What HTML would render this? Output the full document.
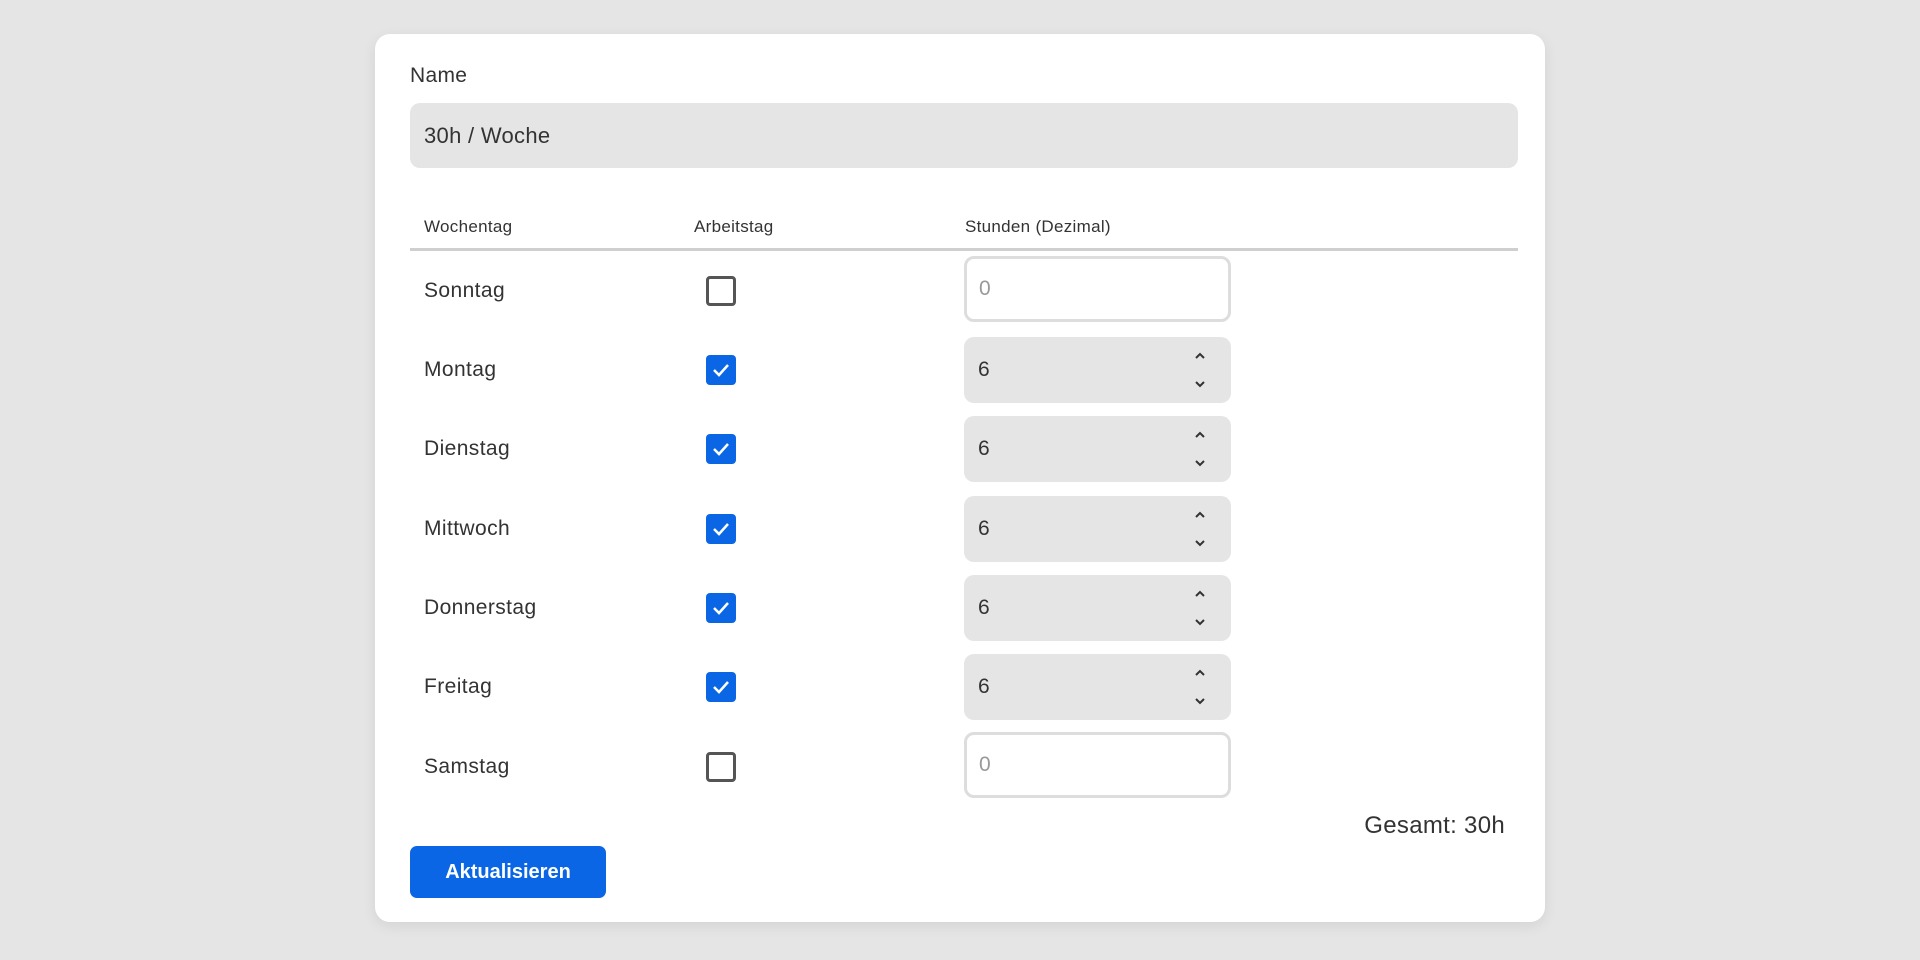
<!DOCTYPE html>
<html><head><meta charset="utf-8"><style>
*{box-sizing:border-box;margin:0;padding:0}
body{width:1920px;height:960px;background:#e5e5e5;font-family:"Liberation Sans",sans-serif;color:#333;position:relative;overflow:hidden}
.card{position:absolute;left:375px;top:34px;width:1170px;height:888px;background:#fff;border-radius:15px;box-shadow:0 4px 14px rgba(0,0,0,.08)}
.abs{position:absolute}
.lbl{font-size:21px;letter-spacing:.4px;color:#333}
.hd{font-size:17px;color:#333;letter-spacing:.3px}
.cb{position:absolute;left:706px;width:30px;height:30px;border-radius:4px}
.cb.off{border:3px solid #555}
.cb.on{background:#0a66e4}
.inp{position:absolute;left:964px;width:267px;height:66px;border-radius:10px;font-size:21px;padding-left:14px;line-height:66px}
.inp.off{border:3px solid #ddd;color:#999;line-height:60px;padding-left:12px}
.inp.on{background:#e5e5e5;color:#333}
.arr{position:absolute;right:24px;width:14px}
</style></head><body>
<div class="card"></div>
<div class="abs" style="left:410px;top:64px;font-size:21px;letter-spacing:.3px">Name</div>
<div class="abs" style="left:410px;top:103px;width:1108px;height:65px;background:#e5e5e5;border-radius:10px;font-size:22px;line-height:65px;padding-left:14px;letter-spacing:.3px">30h / Woche</div>
<div class="abs hd" style="left:424px;top:217px">Wochentag</div>
<div class="abs hd" style="left:694px;top:217px">Arbeitstag</div>
<div class="abs hd" style="left:965px;top:217px">Stunden (Dezimal)</div>
<div class="abs" style="left:410px;top:248px;width:1108px;height:3px;background:#cfcfcf"></div>

<div class="abs lbl" style="left:424px;top:279px">Sonntag</div>
<div class="cb off" style="top:276px"></div>
<div class="inp off" style="top:256px">0</div>

<div class="abs lbl" style="left:424px;top:358px">Montag</div>
<div class="cb on" style="top:355px"><svg width="30" height="30"><path d="M8 15l5 5 9-10" stroke="#fff" stroke-width="2.5" fill="none"/></svg></div>
<div class="inp on" style="top:337px">6<svg class="arr" style="top:12px" height="42" viewBox="0 0 14 42"><path d="M3 9l4-4 4 4M3 33l4 4 4-4" stroke="#333" stroke-width="2" fill="none"/></svg></div>

<div class="abs lbl" style="left:424px;top:437px">Dienstag</div>
<div class="cb on" style="top:434px"><svg width="30" height="30"><path d="M8 15l5 5 9-10" stroke="#fff" stroke-width="2.5" fill="none"/></svg></div>
<div class="inp on" style="top:416px">6<svg class="arr" style="top:12px" height="42" viewBox="0 0 14 42"><path d="M3 9l4-4 4 4M3 33l4 4 4-4" stroke="#333" stroke-width="2" fill="none"/></svg></div>

<div class="abs lbl" style="left:424px;top:517px">Mittwoch</div>
<div class="cb on" style="top:514px"><svg width="30" height="30"><path d="M8 15l5 5 9-10" stroke="#fff" stroke-width="2.5" fill="none"/></svg></div>
<div class="inp on" style="top:496px">6<svg class="arr" style="top:12px" height="42" viewBox="0 0 14 42"><path d="M3 9l4-4 4 4M3 33l4 4 4-4" stroke="#333" stroke-width="2" fill="none"/></svg></div>

<div class="abs lbl" style="left:424px;top:596px">Donnerstag</div>
<div class="cb on" style="top:593px"><svg width="30" height="30"><path d="M8 15l5 5 9-10" stroke="#fff" stroke-width="2.5" fill="none"/></svg></div>
<div class="inp on" style="top:575px">6<svg class="arr" style="top:12px" height="42" viewBox="0 0 14 42"><path d="M3 9l4-4 4 4M3 33l4 4 4-4" stroke="#333" stroke-width="2" fill="none"/></svg></div>

<div class="abs lbl" style="left:424px;top:675px">Freitag</div>
<div class="cb on" style="top:672px"><svg width="30" height="30"><path d="M8 15l5 5 9-10" stroke="#fff" stroke-width="2.5" fill="none"/></svg></div>
<div class="inp on" style="top:654px">6<svg class="arr" style="top:12px" height="42" viewBox="0 0 14 42"><path d="M3 9l4-4 4 4M3 33l4 4 4-4" stroke="#333" stroke-width="2" fill="none"/></svg></div>

<div class="abs lbl" style="left:424px;top:755px">Samstag</div>
<div class="cb off" style="top:752px"></div>
<div class="inp off" style="top:732px">0</div>

<div class="abs" style="right:415px;top:812px;font-size:24px;letter-spacing:.3px">Gesamt: 30h</div>
<div class="abs" style="left:410px;top:846px;width:196px;height:52px;background:#0a66e4;border-radius:7px;color:#fff;font-weight:bold;font-size:20px;line-height:52px;text-align:center">Aktualisieren</div>
</body></html>
